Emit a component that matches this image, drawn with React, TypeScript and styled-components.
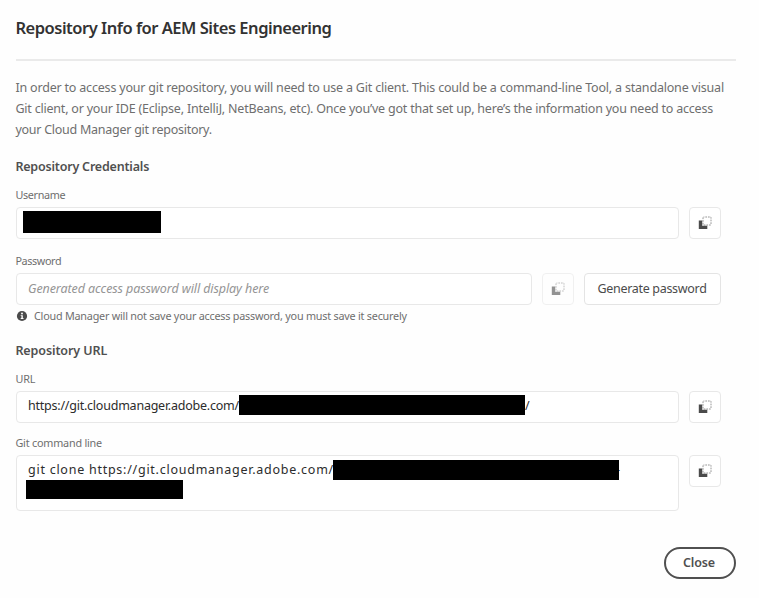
import React from "react";
import styled, { createGlobalStyle } from "styled-components";

const GlobalStyle = createGlobalStyle`
  *, *::before, *::after { box-sizing: border-box; }
  body {
    margin: 0;
    background: #fefefe;
    font-family: "Noto Sans", "Open Sans", sans-serif;
    color: #6e6e6e;
  }
`;

const Dialog = styled.main`
  width: 759px;
  height: 598px;
  padding: 16px 23px 0 16px;
  display: flex;
  flex-direction: column;
  overflow: hidden;
`;

const Title = styled.h1`
  margin: 0 0 0 -0.6px;
  height: 43px;
  line-height: 24px;
  font-size: 16.5px;
  font-weight: 600;
  letter-spacing: -0.48px;
  color: #323232;
`;

const Divider = styled.hr`
  margin: 0;
  height: 2px;
  border: 0;
  flex: none;
  background: #eaeaea;
`;

const Intro = styled.p`
  margin: 16px 0 0 -0.6px;
  font-size: 12.5px;
  line-height: 21px;
  white-space: nowrap;
`;

const IntroLine = styled.span<{ $spacing: number }>`
  display: block;
  letter-spacing: ${(p) => p.$spacing}px;
`;

const Content = styled.div`
  width: 705px;
  display: flex;
  flex-direction: column;
`;

const SectionTitle = styled.h2<{ $spacing: number }>`
  margin: 17px 0 0 -0.6px;
  height: 20px;
  line-height: 20px;
  font-size: 12.5px;
  font-weight: 600;
  letter-spacing: ${(p) => p.$spacing}px;
  color: #505050;
`;

const Label = styled.label<{ $top: number; $spacing: number }>`
  margin: ${(p) => p.$top}px 0 4px -0.6px;
  height: 16px;
  line-height: 16px;
  font-size: 10.8px;
  letter-spacing: ${(p) => p.$spacing}px;
`;

const Row = styled.div`
  display: flex;
  align-items: flex-start;
  gap: 10px;
`;

const Field = styled.div<{ $top?: number; $tall?: boolean }>`
  position: relative;
  flex: 1;
  height: ${(p) => (p.$tall ? 56 : 32)}px;
  padding: ${(p) => p.$top ?? 4}px 11px 0;
  border: 1px solid #e8e8e8;
  border-radius: 4px;
  background: #fff;
  line-height: 20px;
  font-size: 12.5px;
  white-space: nowrap;
  color: #2c2c2c;
`;

const Value = styled.span<{ $spacing: number }>`
  letter-spacing: ${(p) => p.$spacing}px;
`;

const Placeholder = styled.span`
  font-style: italic;
  letter-spacing: -0.09px;
  color: #959595;
`;

const Redaction = styled.span<{ $x: number; $y: number; $w: number; $h: number }>`
  position: absolute;
  left: ${(p) => p.$x}px;
  top: ${(p) => p.$y}px;
  width: ${(p) => p.$w}px;
  height: ${(p) => p.$h}px;
  background: #000;
`;

const Trailing = styled.span<{ $x: number }>`
  position: absolute;
  left: ${(p) => p.$x}px;
`;

const IconButton = styled.button`
  width: 32px;
  height: 32px;
  padding: 0;
  flex: none;
  display: grid;
  place-items: center;
  border: 1px solid #e8e8e8;
  border-radius: 4px;
  background: #fff;
  color: #4b4b4b;
  &:disabled { opacity: 0.6; }
`;

const ActionButton = styled.button`
  width: 137px;
  height: 32px;
  padding: 0 1px 2px 0;
  flex: none;
  border: 1px solid #e4e4e4;
  border-radius: 4px;
  background: #fff;
  font: 400 12.5px "Noto Sans", sans-serif;
  letter-spacing: -0.31px;
  color: #4b4b4b;
`;

const Note = styled.div`
  margin-top: 3px;
  height: 16px;
  display: flex;
  align-items: center;
  gap: 6px;
  font-size: 10.8px;
  line-height: 16px;
  letter-spacing: -0.22px;
`;

const Footer = styled.footer`
  margin-top: 36px;
  display: flex;
  justify-content: flex-end;
`;

const CloseButton = styled.button`
  width: 72px;
  height: 32px;
  padding: 0 2px 2px 0;
  border: 2px solid #505050;
  border-radius: 16px;
  background: #fff;
  font: 600 12.5px "Noto Sans", sans-serif;
  letter-spacing: -0.14px;
  color: #505050;
`;

const CopyIcon = () => (
  <svg width="14" height="14" viewBox="0 0 14 14" fill="none">
    <path d="M0.8 4.6H4.2V9.7H9.3V13H0.8Z" fill="currentColor" />
    <rect x="5" y="1" width="8" height="8" rx="0.5" stroke="currentColor" strokeOpacity="0.65" strokeWidth="0.9" strokeDasharray="1.7 0.967" strokeDashoffset="0.85" />
  </svg>
);

const InfoIcon = () => (
  <svg width="12" height="12" viewBox="0 0 12 12">
    <circle cx="6" cy="6" r="5.1" fill="#4b4b4b" />
    <circle cx="6" cy="3.5" r="0.95" fill="#fff" />
    <path d="M4.7 5.2H6.8V8H7.5V9H4.7V8H5.4V6.1H4.7Z" fill="#fff" />
  </svg>
);

const CopyButton = ({ disabled }: { disabled?: boolean }) => (
  <IconButton disabled={disabled} aria-label="Copy">
    <CopyIcon />
  </IconButton>
);

export default function App() {
  return (
    <>
      <GlobalStyle />
      <Dialog>
        <Title>Repository Info for AEM Sites Engineering</Title>
        <Divider />
        <Intro>
          <IntroLine $spacing={-0.19}>
            In order to access your git repository, you will need to use a Git client. This could be a command-line Tool, a standalone visual
          </IntroLine>
          <IntroLine $spacing={-0.207}>
            Git client, or your IDE (Eclipse, IntelliJ, NetBeans, etc). Once you’ve got that set up, here’s the information you need to access
          </IntroLine>
          <IntroLine $spacing={-0.26}>your Cloud Manager git repository.</IntroLine>
        </Intro>
        <Content>
          <SectionTitle $spacing={-0.2}>Repository Credentials</SectionTitle>
          <Label $top={10} $spacing={-0.33}>Username</Label>
          <Row>
            <Field>
              <Redaction $x={6} $y={3} $w={138} $h={22} />
            </Field>
            <CopyButton />
          </Row>
          <Label $top={14} $spacing={-0.38}>Password</Label>
          <Row>
            <Field $top={5}>
              <Placeholder>Generated access password will display here</Placeholder>
            </Field>
            <CopyButton disabled />
            <ActionButton>Generate password</ActionButton>
          </Row>
          <Note>
            <InfoIcon />
            Cloud Manager will not save your access password, you must save it securely
          </Note>
          <SectionTitle $spacing={-0.1}>Repository URL</SectionTitle>
          <Label $top={10} $spacing={-0.1}>URL</Label>
          <Row>
            <Field>
              <Value $spacing={-0.23}>https://git.cloudmanager.adobe.com/</Value>
              <Redaction $x={222} $y={3} $w={286} $h={20} />
              <Trailing $x={508}>/</Trailing>
            </Field>
            <CopyButton />
          </Row>
          <Label $top={12} $spacing={-0.2}>Git command line</Label>
          <Row>
            <Field $top={4} $tall>
              <Value $spacing={0.744}>git clone https://git.cloudmanager.adobe.com/</Value>
              <Trailing $x={599}>-</Trailing>
              <Redaction $x={316} $y={4} $w={286} $h={20} />
              <Redaction $x={9} $y={24} $w={157} $h={19} />
            </Field>
            <CopyButton />
          </Row>
        </Content>
        <Footer>
          <CloseButton>Close</CloseButton>
        </Footer>
      </Dialog>
    </>
  );
}
